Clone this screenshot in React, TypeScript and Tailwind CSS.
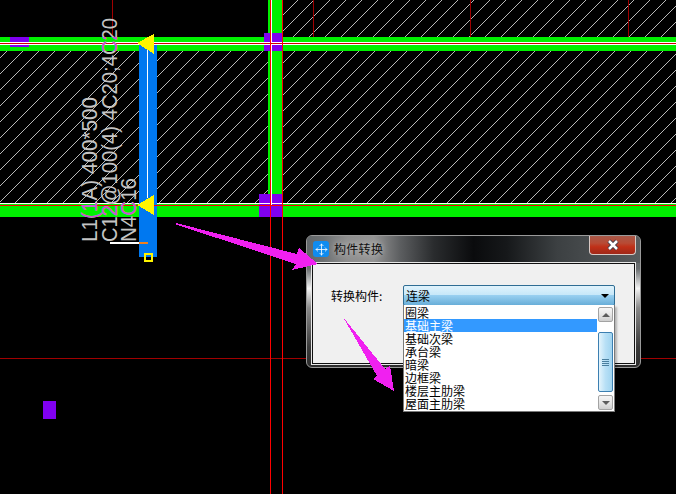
import React from "react";
import { Move } from "lucide-react";

const cjk = "font-['Noto_Sans_CJK_SC','Liberation_Sans',sans-serif]";

const items = ["圈梁", "基础主梁", "基础次梁", "承台梁", "暗梁", "边框梁", "楼层主肋梁", "屋面主肋梁"];

// rotated beam annotations: baseline x, text, length along the y axis
const notes = [
  { x: 97, text: "L1(1A) 400*500", length: 145 },
  { x: 117, text: "C12@100(4) 4C20;4C20", length: 224 },
  { x: 136, text: "N4C16", length: 64 },
];

const hatchLines = Array.from({ length: 74 }, (_, i) => 10 + i * 16);

function Drawing() {
  return (
    <svg className="absolute inset-0" width={676} height={494} viewBox="0 0 676 494" shapeRendering="crispEdges">
      <defs>
        <clipPath id="hatch">
          <rect x={0} y={51} width={676} height={152} />
          <rect x={283} y={0} width={393} height={37} />
        </clipPath>
        <clipPath id="bands">
          <rect x={0} y={37} width={676} height={14} />
          <rect x={0} y={203} width={676} height={14} />
        </clipPath>
      </defs>

      {/* hatching */}
      <g clipPath="url(#hatch)" stroke="#b8b8b8" strokeWidth={1}>
        {hatchLines.map((c) => (
          <line key={c} x1={c} y1={0} x2={0} y2={c} />
        ))}
      </g>

      {/* axis lines behind the beams */}
      <rect x={112} y={0} width={1} height={42} fill="#a00000" />
      <rect x={313} y={0} width={1} height={42} fill="#a00000" />
      <rect x={470} y={0} width={1} height={42} fill="#a00000" />
      <rect x={628} y={0} width={1} height={42} fill="#a00000" />
      <rect x={0} y={358} width={676} height={1} fill="#a00000" />

      {/* beams */}
      <rect x={0} y={37} width={676} height={14} fill="#00f000" />
      <rect x={0} y={203} width={676} height={14} fill="#00f000" />
      <rect x={268} y={0} width={15} height={203} fill="#00f000" />

      {/* columns */}
      <rect x={10} y={37} width={19} height={10} fill="#8000f0" />
      <rect x={264} y={33} width={19} height={18} fill="#8000f0" />
      <rect x={259} y={194} width={23} height={23} fill="#8000f0" />
      <rect x={43} y={401} width={13} height={18} fill="#8000f0" />

      {/* centre lines */}
      <rect x={0} y={42} width={676} height={3} fill="#ffffff" />
      <rect x={0} y={203} width={676} height={1} fill="#ffffff" />
      <rect x={271} y={0} width={1} height={205} fill="#ffffff" />

      {/* selected beam */}
      <rect x={139} y={45} width={18} height={212} fill="#0078f0" />
      <rect x={147} y={48} width={1} height={150} fill="#ffffff" />

      <rect x={0} y={43} width={676} height={1} fill="#d00000" />
      <rect x={0} y={205} width={676} height={1} fill="#ff0000" />
      <rect x={270} y={0} width={1} height={494} fill="#ff0000" />
      <rect x={282} y={0} width={1} height={494} fill="#ff0000" />

      <polygon points="137,43 154,34 154,54" fill="#fff500" />
      <polygon points="137,205 154,195 154,215" fill="#fff500" />

      <rect x={110} y={242} width={29} height={2} fill="#ffffff" />
      <rect x={139} y={242} width={9} height={2} fill="#f08020" />
      <rect x={145} y={254} width={7} height={7} fill="none" stroke="#fff500" strokeWidth={2} />

      {/* text picks up a magenta tone where it crosses a beam */}
      <g shapeRendering="auto" className="font-['Liberation_Sans',sans-serif]" fontSize={22}>
        {notes.map((n) => (
          <text key={n.x} transform={`translate(${n.x},242) rotate(-90)`} fill="#c4c4c4" textLength={n.length} lengthAdjust="spacingAndGlyphs">
            {n.text}
          </text>
        ))}
        <g clipPath="url(#bands)">
          {notes.map((n) => (
            <text key={n.x} transform={`translate(${n.x},242) rotate(-90)`} fill="#c850d0" textLength={n.length} lengthAdjust="spacingAndGlyphs">
              {n.text}
            </text>
          ))}
        </g>
      </g>
    </svg>
  );
}

function Arrows() {
  return (
    <svg className="absolute inset-0 pointer-events-none" width={676} height={494} viewBox="0 0 676 494" shapeRendering="crispEdges">
      <polygon points="176,223 297,254 299,248 318,264 292,270 296,264 176,224.5" fill="#f020f0" />
      <polygon points="343,317 385,369 390,366 394,391 373,379 377,376" fill="#f020f0" />
    </svg>
  );
}

function ScrollButton({ up }: { up?: boolean }) {
  return (
    <div className="h-[15px] w-[15px] rounded-[2px] border border-[#a3a3a3] bg-[linear-gradient(180deg,#f6f6f6,#e6e6e6_50%,#cfcfcf)] flex items-center justify-center">
      <div
        className={
          up
            ? "w-0 h-0 border-x-[4px] border-x-transparent border-b-[4px] border-b-[#5c5c5c]"
            : "w-0 h-0 border-x-[4px] border-x-transparent border-t-[4px] border-t-[#5c5c5c]"
        }
      />
    </div>
  );
}

function Dropdown() {
  return (
    <div className={`absolute left-[-1px] top-full w-[212px] h-[107px] bg-white border border-[#7a7a7a] border-t-0 shadow-[2px_2px_2px_rgba(0,0,0,0.25)] flex ${cjk}`}>
      <div className="w-[193px] pt-[1px]">
        {items.map((item) => (
          <div
            key={item}
            className={
              item === "基础主梁"
                ? "h-[13px] leading-[13px] text-[12px] pl-[1px] bg-[#3399ff] text-white whitespace-nowrap"
                : "h-[13px] leading-[13px] text-[12px] pl-[1px] text-black whitespace-nowrap"
            }
          >
            {item}
          </div>
        ))}
      </div>
      <div className="flex-1 flex flex-col items-center pt-[2px] pb-[1px]">
        <ScrollButton up />
        <div className="mt-[10px] h-[60px] w-[15px] rounded-[2px] border border-[#3c7fb1] bg-[linear-gradient(90deg,#e4f4fc,#b8e0f6_50%,#a0d4f0)] flex flex-col items-center justify-center gap-[1px]">
          <div className="w-[7px] h-[1px] bg-[#4a7f9f]" />
          <div className="w-[7px] h-[1px] bg-[#4a7f9f]" />
          <div className="w-[7px] h-[1px] bg-[#4a7f9f]" />
          <div className="w-[7px] h-[1px] bg-[#4a7f9f]" />
        </div>
        <div className="mt-auto">
          <ScrollButton />
        </div>
      </div>
    </div>
  );
}

function Dialog() {
  return (
    <div className="absolute left-[306px] top-[235px] w-[335px] h-[133px] rounded-[6px] border border-[#9a9a9a] bg-[linear-gradient(180deg,#505457_0%,#6a6e70_25%,#f4f4f4_40%,#8a8a8a_55%,#3a3a3a_85%,#2c2c2c_100%)] flex flex-col">
      {/* title bar */}
      <div className="h-[27px] shrink-0 rounded-t-[5px] bg-[linear-gradient(90deg,#62676a_0%,#6e7173_5%,#8e8e8e_12%,#949494_20%,#5c5e60_28%,#2a2c2e_38%,#0a0b0d_50%,#16181a_60%,#3c4042_75%,#585c5e_100%)] flex items-start pl-[6px] pr-[4px]">
        <div className="mt-[5px] w-[16px] h-[16px] rounded-[3px] bg-[#0f8cf0] flex items-center justify-center">
          <Move size={13} color="#ffffff" strokeWidth={1.5} />
        </div>
        <span className={`ml-[5px] mt-[5px] text-[12px] leading-[16px] tracking-[0.3px] text-[#101010] [text-shadow:0_0_6px_#d8d8d8] ${cjk}`}>构件转换</span>
        <div className="ml-auto h-[19px] w-[47px] rounded-b-[4px] border border-t-0 border-[#d8c8c4] bg-[linear-gradient(180deg,#a85848_0%,#b84a34_40%,#c03018_60%,#a02818_100%)] flex items-center justify-center">
          <svg width={14} height={12} viewBox="0 0 14 12">
            <path d="M3 2 L11 10 M11 2 L3 10" stroke="#3c3c4c" strokeWidth={4.5} fill="none" />
            <path d="M3 2 L11 10 M11 2 L3 10" stroke="#ffffff" strokeWidth={2.5} fill="none" />
          </svg>
        </div>
      </div>

      {/* client area */}
      <div className="mx-[5px] mb-[3px] flex-1 bg-[#f0f0f0] border border-[#101010] outline outline-1 outline-[#e8e8e8] pt-[21px] pl-[18px]">
        <div className="flex items-center">
          <span className={`w-[72px] text-[12px] leading-[20px] text-black ${cjk}`}>转换构件:</span>
          <div className="relative w-[212px] h-[21px] rounded-[2px] border border-[#2f6d94] bg-[linear-gradient(180deg,#e0f3fc_0%,#c8e8f9_45%,#98cff0_50%,#68aed8_100%)] flex items-center pl-[2px] pr-[5px]">
            <span className={`text-[12px] leading-[18px] text-black ${cjk}`}>连梁</span>
            <div className="ml-auto w-0 h-0 border-x-[4px] border-x-transparent border-t-[4px] border-t-black" />
            <Dropdown />
          </div>
        </div>
      </div>
    </div>
  );
}

export default function App() {
  return (
    <div className="relative w-[676px] h-[494px] bg-black overflow-hidden">
      <Drawing />
      <Dialog />
      <Arrows />
    </div>
  );
}
